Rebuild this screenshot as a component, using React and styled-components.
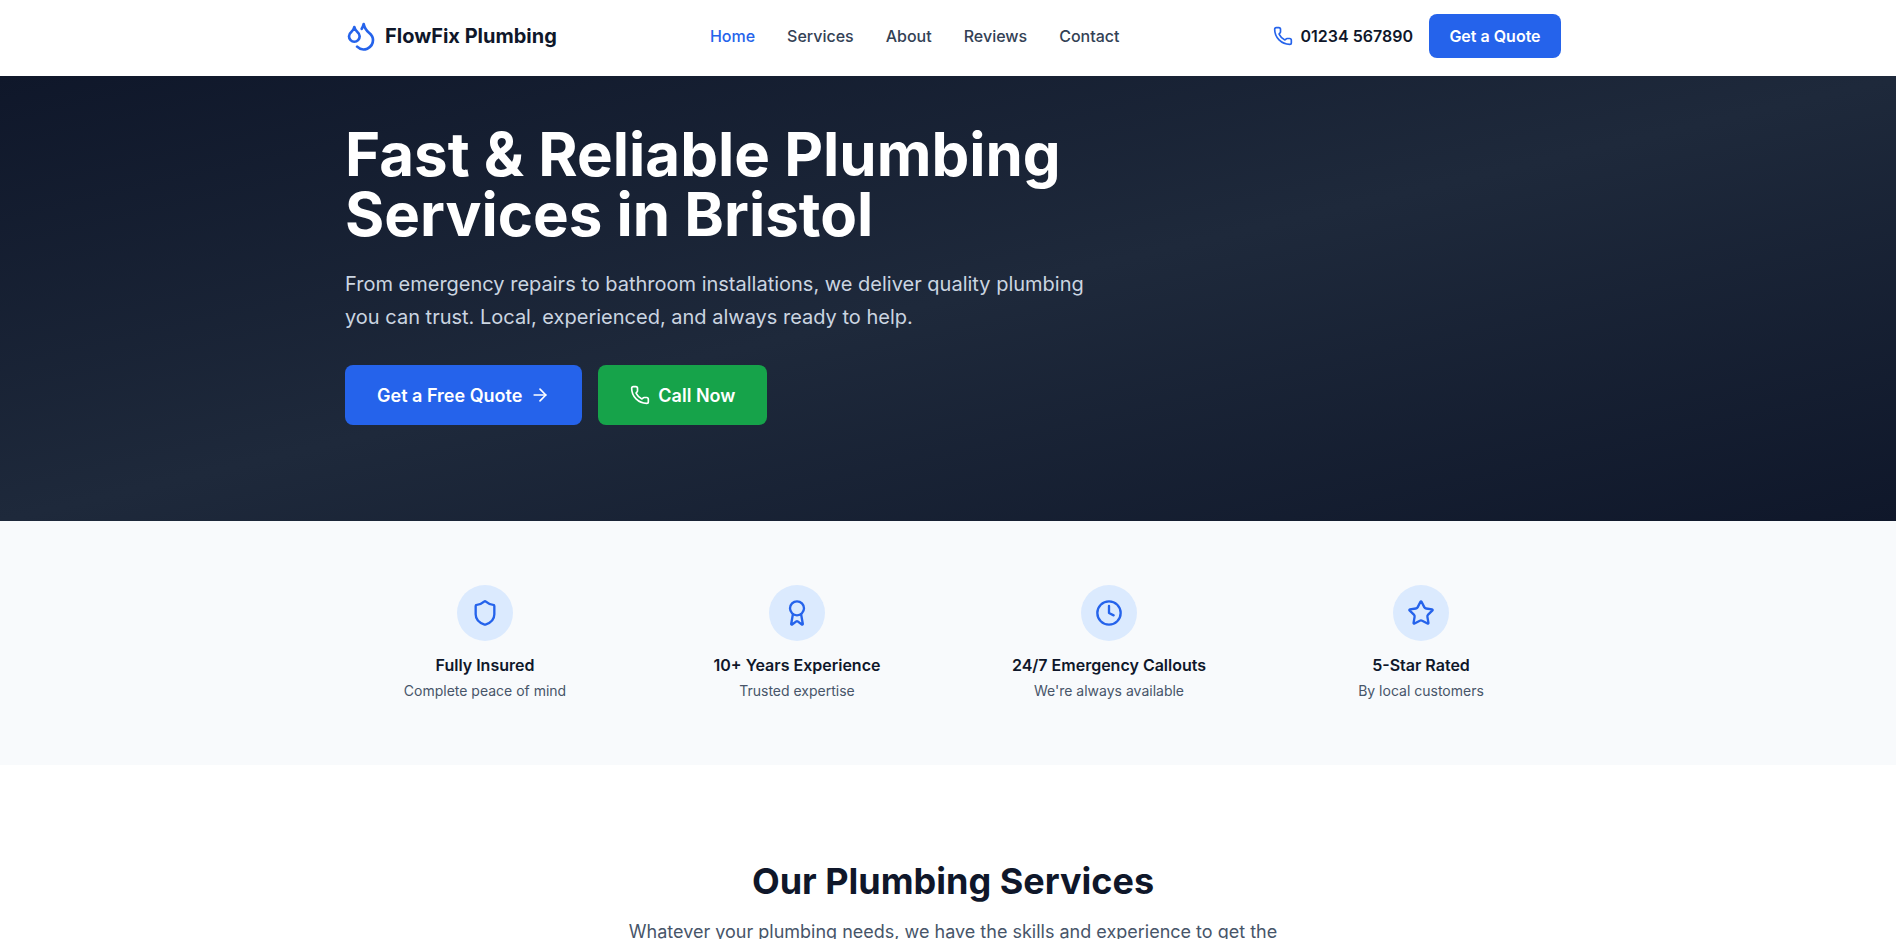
import React from 'react';
import styled, { createGlobalStyle } from 'styled-components';
import { Phone, ArrowRight, Shield, Award, Clock, Star, Droplets } from 'lucide-react';

const Global = createGlobalStyle`
  html, body { margin: 0; padding: 0; height: 939px; overflow: hidden; background: #fff; }
  body { font-family: Inter, "Noto Sans", sans-serif; color: #0f172a; }
  * { box-sizing: border-box; }
`;

const Page = styled.div`
  width: 1906px;
  height: 939px;
  overflow: hidden;
`;
const Container = styled.div`
  width: 1216px;
  margin: 0 auto;
`;
const HeaderBar = styled.header`
  height: 76px;
  padding-bottom: 4px;
  background: #fff;
`;
const HeaderInner = styled(Container)`
  height: 100%;
  display: flex;
  align-items: center;
  justify-content: space-between;
`;
const Brand = styled.a`
  display: flex;
  align-items: center;
  gap: 8px;
  font-size: 20px;
  font-weight: 700;
  color: #0f172a;
`;
const Nav = styled.nav`
  display: flex;
  gap: 32px;
`;
const NavLink = styled.a`
  font-size: 16px;
  font-weight: 500;
  color: ${p => (p.$active ? '#2563eb' : '#334155')};
`;
const HeaderRight = styled.div`
  display: flex;
  align-items: center;
  gap: 16px;
`;
const PhoneLink = styled.a`
  display: flex;
  align-items: center;
  gap: 8px;
  font-size: 16px;
  font-weight: 600;
  color: #0f172a;
  svg { color: #2563eb; }
`;
const QuoteButton = styled.a`
  width: 132px;
  height: 44px;
  display: flex;
  align-items: center;
  justify-content: center;
  border-radius: 8px;
  background: #2563eb;
  color: #fff;
  font-size: 16px;
  font-weight: 600;
`;
const Hero = styled.section`
  height: 445px;
  background: linear-gradient(to bottom right, #0f172a 0%, #1e293b 50%, #0f172a 100%);
  padding-top: 48px;
`;
const HeroTitle = styled.h1`
  margin: 0 0 24px;
  font-size: 60px;
  line-height: 60px;
  font-weight: 700;
  color: #fff;
`;
const HeroText = styled.p`
  margin: 0 0 32px;
  max-width: 768px;
  font-size: 20px;
  line-height: 32.5px;
  color: #cbd5e1;
`;
const HeroActions = styled.div`
  display: flex;
  gap: 16px;
`;
const HeroButton = styled.a`
  height: 60px;
  padding: 0 32px;
  display: flex;
  align-items: center;
  gap: 8px;
  border-radius: 8px;
  background: ${p => (p.$green ? '#16a34a' : '#2563eb')};
  color: #fff;
  font-size: 18px;
  font-weight: 600;
`;
const TrustBand = styled.section`
  height: 244px;
  background: #f8fafc;
  padding-top: 64px;
`;
const TrustGrid = styled(Container)`
  display: grid;
  grid-template-columns: repeat(4, 1fr);
  column-gap: 32px;
`;
const TrustItem = styled.div`
  display: flex;
  flex-direction: column;
  align-items: center;
  text-align: center;
`;
const TrustIcon = styled.div`
  width: 56px;
  height: 56px;
  border-radius: 50%;
  background: #dbeafe;
  color: #2563eb;
  display: flex;
  align-items: center;
  justify-content: center;
  margin-bottom: 12px;
`;
const TrustTitle = styled.h3`
  margin: 0 0 4px;
  font-size: 16px;
  line-height: 24px;
  font-weight: 600;
  color: #0f172a;
`;
const TrustText = styled.p`
  margin: 0;
  font-size: 14px;
  line-height: 20px;
  color: #475569;
`;
const Services = styled.section`
  padding-top: 96px;
  text-align: center;
`;
const ServicesTitle = styled.h2`
  margin: 0 0 16px;
  font-size: 36px;
  line-height: 40px;
  font-weight: 700;
  color: #0f172a;
`;
const ServicesText = styled.p`
  margin: 0 auto;
  max-width: 672px;
  font-size: 18px;
  line-height: 29px;
  color: #475569;
`;

const trust = [
  { Icon: Shield, title: 'Fully Insured', text: 'Complete peace of mind' },
  { Icon: Award, title: '10+ Years Experience', text: 'Trusted expertise' },
  { Icon: Clock, title: '24/7 Emergency Callouts', text: "We're always available" },
  { Icon: Star, title: '5-Star Rated', text: 'By local customers' },
];
const links = ['Home', 'Services', 'About', 'Reviews', 'Contact'];

export default function App() {
  return (
    <Page>
      <Global />
      <HeaderBar>
        <HeaderInner>
          <Brand><Droplets size={32} color="#2563eb" />FlowFix Plumbing</Brand>
          <Nav>
            {links.map((l, i) => <NavLink key={l} $active={i === 0}>{l}</NavLink>)}
          </Nav>
          <HeaderRight>
            <PhoneLink><Phone size={20} />01234 567890</PhoneLink>
            <QuoteButton>Get a Quote</QuoteButton>
          </HeaderRight>
        </HeaderInner>
      </HeaderBar>
      <Hero>
        <Container>
          <HeroTitle>Fast &amp; Reliable Plumbing<br />Services in Bristol</HeroTitle>
          <HeroText>From emergency repairs to bathroom installations, we deliver quality plumbing<br />you can trust. Local, experienced, and always ready to help.</HeroText>
          <HeroActions>
            <HeroButton>Get a Free Quote<ArrowRight size={20} /></HeroButton>
            <HeroButton $green><Phone size={20} />Call Now</HeroButton>
          </HeroActions>
        </Container>
      </Hero>
      <TrustBand>
        <TrustGrid>
          {trust.map(({ Icon, title, text }) => (
            <TrustItem key={title}>
              <TrustIcon><Icon size={28} /></TrustIcon>
              <TrustTitle>{title}</TrustTitle>
              <TrustText>{text}</TrustText>
            </TrustItem>
          ))}
        </TrustGrid>
      </TrustBand>
      <Services>
        <ServicesTitle>Our Plumbing Services</ServicesTitle>
        <ServicesText>Whatever your plumbing needs, we have the skills and experience to get the job done right.</ServicesText>
      </Services>
    </Page>
  );
}
